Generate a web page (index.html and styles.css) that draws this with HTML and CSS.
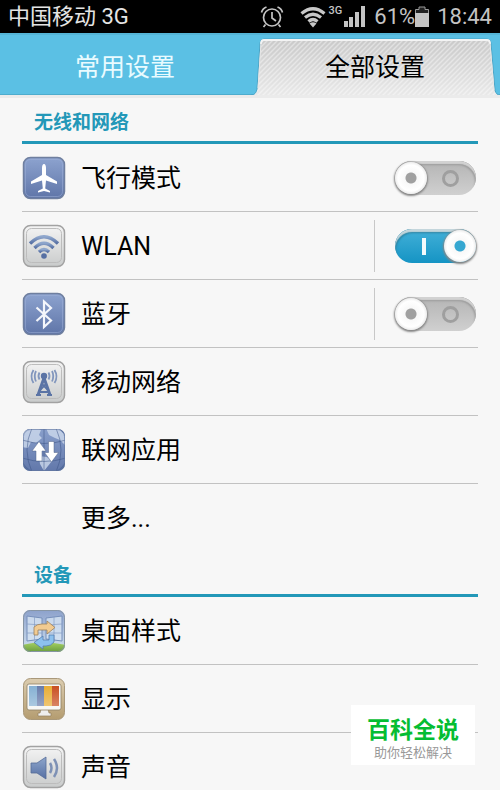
FILE: index.html
```html
<!DOCTYPE html>
<html lang="zh-CN">
<head>
    <meta charset="utf-8">
    <meta name="viewport" content="width=device-width, initial-scale=1">
    <title>全部设置</title>
    <link rel="stylesheet" href="styles.css">
</head>
<body>
    <!-- shared gradients and the tab texture -->
    <svg class="defs" width="0" height="0" aria-hidden="true">
        <defs>
            <linearGradient id="blue" x1="0" y1="0" x2="0" y2="1">
                <stop offset="0" stop-color="#8da3cf"/>
                <stop offset="1" stop-color="#5f75a8"/>
            </linearGradient>
            <linearGradient id="silver" x1="0" y1="0" x2="0" y2="1">
                <stop offset="0" stop-color="#f4f4f4"/>
                <stop offset="1" stop-color="#c9cbcb"/>
            </linearGradient>
            <linearGradient id="ink" x1="0" y1="0" x2="0" y2="1">
                <stop offset="0" stop-color="#8ea6cc"/>
                <stop offset="1" stop-color="#566fa3"/>
            </linearGradient>
            <linearGradient id="sky" x1="0" y1="0" x2="0" y2="1">
                <stop offset="0" stop-color="#8ba0cb"/>
                <stop offset="1" stop-color="#d3e4f0"/>
            </linearGradient>
            <linearGradient id="wood" x1="0" y1="0" x2="0" y2="1">
                <stop offset="0" stop-color="#dccdb0"/>
                <stop offset="1" stop-color="#b49c70"/>
            </linearGradient>
            <linearGradient id="grass" x1="0" y1="0" x2="0" y2="1">
                <stop offset="0" stop-color="#a4cf62"/>
                <stop offset="1" stop-color="#63983a"/>
            </linearGradient>
            <linearGradient id="tabfade" x1="0" y1="0" x2="0" y2="1">
                <stop offset="0" stop-color="#c9c9c9"/>
                <stop offset="1" stop-color="#e9e9e9"/>
            </linearGradient>
            <linearGradient id="shine" x1="0" y1="0" x2="0" y2="1">
                <stop offset="0" stop-color="#fff" stop-opacity="0"/>
                <stop offset="1" stop-color="#fff" stop-opacity=".5"/>
            </linearGradient>
            <pattern id="stripes" width="5" height="5" patternUnits="userSpaceOnUse">
                <path d="M-1 1L1 -1M0 5L5 0M4 6L6 4" stroke="#fff" stroke-opacity=".4" stroke-width="1.4"/>
            </pattern>
            <clipPath id="tile"><rect x="1" y="1" width="42" height="42" rx="7"/></clipPath>
        </defs>
    </svg>

    <header>
        <div class="statusbar">
            <span class="carrier">中国移动 3G</span>
            <svg class="alarm" width="24" height="24" viewBox="0 0 24 24" fill="none" stroke="#c4c4c4" stroke-width="1.7">
                <circle cx="12" cy="12.5" r="8.5"/>
                <path d="M12 7v6l4 3M5.5 19.5l-2 2.5M18.5 19.5l2 2.5M1.5 7.5Q2.5 3.5 6.5 2M22.5 7.5Q21.5 3.5 17.5 2"/>
            </svg>
            <svg class="wifi" width="26" height="22" viewBox="0 0 26 22" fill="none" stroke="#c8c8c8" stroke-width="3.2">
                <path d="M1.5 7.5Q13 -2 24.5 7.5M5 11.5Q13 5 21 11.5M8.5 15.5Q13 11.5 17.5 15.5"/>
                <path d="M9.5 17.5Q13 15 16.5 17.5L13 21.5z" fill="#c8c8c8" stroke="none"/>
            </svg>
            <span class="net">3G</span>
            <svg class="signal" width="22" height="22" viewBox="0 0 22 22" fill="#c4c4c4">
                <path d="M0 15h4v6H0zM5 11h4v10H5zM11 6h4v15h-4zM17 0h4v21h-4z"/>
            </svg>
            <span class="level">61%</span>
            <svg class="battery" width="14" height="22" viewBox="0 0 14 22">
                <path d="M.5 3.500H4V1h6v2.500h3.500V8H.5z" fill="#222" stroke="#999"/>
                <path d="M0 7h14v14H0z" fill="#c4c4c4"/>
            </svg>
            <span class="clock">18:44</span>
        </div>
        <nav class="tabs">
            <button type="button" class="tab">常用设置</button>
            <button type="button" class="tab active">
                <svg viewBox="0 0 250 62" preserveAspectRatio="none" aria-hidden="true">
                    <path d="M1 62Q6 62 7 56L10 10Q10 6 14 6H237Q241 6 241 10L245 57Q246 62 250 62z" fill="url(#tabfade)"/>
                    <path d="M1 62Q6 62 7 56L10 10Q10 6 14 6H237Q241 6 241 10L245 57Q246 62 250 62z" fill="url(#stripes)"/>
                    <path d="M1 62Q6 62 7 56L10 10Q10 6 14 6H237Q241 6 241 10L245 57Q246 62 250 62" fill="none" stroke="#49a5c8"/>
                    <path d="M11 11Q11 7 14 7H237Q240 7 240 11" fill="none" stroke="#f4f4f4" stroke-width="2"/>
                    <path d="M8 55L11 10M240 10L244 57" fill="none" stroke="#e6e6e6"/>
                </svg>
                <span>全部设置</span>
            </button>
        </nav>
    </header>

    <main>
        <section>
            <h2>无线和网络</h2>
            <ul>
                <li>
                    <svg class="icon" viewBox="0 0 44 44">
                        <rect x="1.5" y="1.5" width="41" height="41" rx="7" fill="url(#blue)" stroke="#6f7f9f" stroke-width="1.5"/>
                        <rect x="3.5" y="3.5" width="37" height="37" rx="5" fill="none" stroke="#9fb2d8" stroke-opacity=".5"/>
                        <path d="M22 8c1.400 0 2 2 2 4v7l11 6.500V28l-11-3.500-.8 8 4.800 2.500v1.500L22 35l-6 1.500V35l4.800-2.500-.8-8L9 28v-2.500L20 19v-7c0-2 .6-4 2-4z" fill="#fff"/>
                    </svg>
                    <label for="airplane">飞行模式</label>
                    <span class="control"><input type="checkbox" id="airplane" class="switch"></span>
                </li>
                <li>
                    <svg class="icon" viewBox="0 0 44 44">
                        <rect x="1.5" y="1.5" width="41" height="41" rx="7" fill="url(#silver)" stroke="#a2a2a2" stroke-width="1.5"/>
                        <rect x="4.5" y="4.5" width="35" height="34" rx="5" fill="none" stroke="#bcbcbc"/>
                        <g fill="none" stroke="url(#ink)" stroke-width="3.4">
                            <path d="M8 19.5Q22 6 36 19.500"/>
                            <path d="M12.5 24Q22 14.5 31.5 24"/>
                            <path d="M17 28Q22 23 27 28"/>
                        </g>
                        <circle cx="22" cy="32" r="2.800" fill="#566fa3"/>
                    </svg>
                    <label for="wlan">WLAN</label>
                    <span class="control split"><input type="checkbox" id="wlan" class="switch" checked></span>
                </li>
                <li>
                    <svg class="icon" viewBox="0 0 44 44">
                        <rect x="1.5" y="1.5" width="41" height="41" rx="7" fill="url(#blue)" stroke="#6f7f9f" stroke-width="1.5"/>
                        <rect x="3.5" y="3.5" width="37" height="37" rx="5" fill="none" stroke="#9fb2d8" stroke-opacity=".5"/>
                        <path d="M14.5 15.5L29 28.5L22 35V9.5L29 16L14.5 29" fill="none" stroke="#f4f6fb" stroke-width="2.2"/>
                    </svg>
                    <label for="bluetooth">蓝牙</label>
                    <span class="control split"><input type="checkbox" id="bluetooth" class="switch"></span>
                </li>
                <li>
                    <svg class="icon" viewBox="0 0 44 44">
                        <rect x="1.5" y="1.5" width="41" height="41" rx="7" fill="url(#silver)" stroke="#a2a2a2" stroke-width="1.5"/>
                        <rect x="4.5" y="4.5" width="35" height="34" rx="5" fill="none" stroke="#bcbcbc"/>
                        <g fill="none" stroke="#5b74a5" stroke-width="1.8">
                            <path d="M22 18L16 35M22 18L28 35" stroke-width="3"/>
                            <path d="M20 24L27 31M24 24L17 31M17 32h10"/>
                            <path d="M17.5 12.5Q15.5 16 17.5 19.5M26.5 12.5Q28.5 16 26.5 19.5M14 11Q11.5 16 14 21.5M30 11Q32.5 16 30 21.5M11.500 10Q7.5 16.5 11.5 23M32.5 10Q36.5 16.5 32.5 23" stroke="#8196bd"/>
                        </g>
                        <circle cx="22" cy="16" r="3.2" fill="#5b74a5"/>
                        <path d="M14 34h5v2h-5zM25 34h5v2h-5z" fill="#5b74a5"/>
                    </svg>
                    <a href="#mobile">移动网络</a>
                </li>
                <li>
                    <svg class="icon" viewBox="0 0 44 44">
                        <g clip-path="url(#tile)">
                            <rect width="44" height="44" fill="#526b9d"/>
                            <circle cx="22" cy="21" r="25" fill="url(#blue)"/>
                            <path d="M0 4Q12 -2 19 2L17 7L20 10L14 15L9 14L6 20L0 19zM24 0L36 0L42 6L44 18L38 12L33 10L27 7zM17 28L25 29L30 33L26 38L22 43L18 36z" fill="#cdd9ec" opacity=".8"/>
                            <path d="M22 0V44M10 0Q0 22 10 44M34 0Q44 22 34 44M0 12Q22 19 44 12M0 30Q22 37 44 30" fill="none" stroke="#3c5485" stroke-opacity=".5"/>
                        </g>
                        <path d="M17 13.5L24 23H20V33H14V23H10z" fill="#fff" stroke="#53658b" stroke-width=".5"/>
                        <path d="M26.5 13.5H32V24.5H36.5L29.5 34L22.5 24.5H26.5z" fill="#fff" stroke="#53658b" stroke-width=".5"/>
                        <rect x="1.5" y="1.5" width="41" height="41" rx="7" fill="none" stroke="#62769e" stroke-opacity=".6"/>
                    </svg>
                    <a href="#apps">联网应用</a>
                </li>
                <li>
                    <span class="icon"></span>
                    <a href="#more">更多...</a>
                </li>
            </ul>
        </section>

        <section>
            <h2>设备</h2>
            <ul>
                <li>
                    <svg class="icon" viewBox="0 0 44 44">
                        <g clip-path="url(#tile)">
                            <rect width="44" height="44" fill="url(#sky)"/>
                            <path d="M0 36Q20 31 44 36V44H0z" fill="url(#grass)"/>
                            <path d="M5 7L20 9V30L5 32zM24 9L40 7V32L24 30z" fill="#d6e4f3" fill-opacity=".8" stroke="#768fbb"/>
                            <path d="M5 15L20 16M5 24H20M12.5 8V31M24 16L40 15M24 24H40M32 8V31" fill="none" stroke="#849cc5" stroke-opacity=".7"/>
                        </g>
                        <path d="M12 18Q15 15 20 15H25V12L33 18.5L25 25V21H16V26H12z" fill="#f2cb91" stroke="#9b805d" stroke-width=".8"/>
                        <path d="M32 26V33Q29 37 24 37H21V40L12 33.5L21 27V31H27V26z" fill="#8cc1ee" stroke="#557daf" stroke-width=".8"/>
                        <rect x="1.5" y="1.5" width="41" height="41" rx="7" fill="none" stroke="#8795a4"/>
                    </svg>
                    <a href="#home">桌面样式</a>
                </li>
                <li>
                    <svg class="icon" viewBox="0 0 44 44">
                        <rect x="1.5" y="1.5" width="41" height="41" rx="7" fill="url(#wood)" stroke="#a9987a"/>
                        <path d="M19 32H26L27 36H29V39H16V36H18z" fill="#eee" stroke="#94805c" stroke-width=".7"/>
                        <rect x="5" y="7" width="34" height="26" rx="2" fill="#f7f7f5" stroke="#8f8165" stroke-width=".8"/>
                        <path d="M7 9h8v20H7z" fill="#86b1d3"/>
                        <path d="M15 9h7v20h-7z" fill="#687cab"/>
                        <path d="M22 9h8v20h-8z" fill="#e9ad35"/>
                        <path d="M30 9h7v20h-7z" fill="#c94f22"/>
                        <path d="M7 9h30v20H7z" fill="url(#shine)" opacity=".6"/>
                    </svg>
                    <a href="#display">显示</a>
                </li>
                <li>
                    <svg class="icon" viewBox="0 0 44 44">
                        <rect x="1.5" y="1.5" width="41" height="41" rx="7" fill="url(#silver)" stroke="#a2a2a2" stroke-width="1.5"/>
                        <rect x="4.5" y="4.5" width="35" height="34" rx="5" fill="none" stroke="#bcbcbc"/>
                        <path d="M9 18H15L24 12V34L15 28H9z" fill="url(#ink)" stroke="#566c98" stroke-width=".8"/>
                        <path d="M28 18Q31 23 28 28M32 14Q38 23 32 32" fill="none" stroke="#7e91b5" stroke-width="2.5"/>
                    </svg>
                    <a href="#sound">声音</a>
                </li>
            </ul>
        </section>
    </main>

    <aside class="badge">
        <strong>百科全说</strong>
        <span>助你轻松解决</span>
    </aside>
</body>
</html>
```

FILE: styles.css
```css
*,
*::before,
*::after {
    box-sizing: border-box;
}
body {
    margin: 0;
    height: 100vh;
    overflow: hidden;
    background: #f7f7f7;
    color: #000;
    font-family: Roboto, "Noto Sans CJK SC", sans-serif;
    font-size: 25px;
}
svg {
    display: block;
    flex: none;
}
.defs {
    position: absolute;
}

/* status bar */
.statusbar {
    display: flex;
    align-items: center;
    height: 33px;
    padding: 0 8px;
    background: #000;
    color: #c4c4c4;
    font-size: 22px;
    line-height: 32px;
    white-space: nowrap;
}
.carrier {
    margin-right: auto;
    color: #e4e4e4;
}
.wifi {
    margin-left: 16px;
}
.net {
    align-self: flex-start;
    margin: 0 2px 0 3px;
    font-size: 11px;
    font-weight: 500;
    line-height: 22px;
}
.level,
.clock {
    margin-left: 8px;
}

/* tabs */
.tabs {
    display: grid;
    grid-template-columns: 1fr 1fr;
    height: 65px;
    border-bottom: 3px solid #ebebeb;
    background: #5bc0e4;
    box-shadow: inset 0 2px #54b4d6, inset 0 -1px #4daccd;
}
.tab {
    position: relative;
    border: 0;
    padding: 8px 0 0;
    background: none;
    color: #e9fbff;
    font: inherit;
    line-height: 38px;
}
.tab.active {
    color: #000;
}
.tab svg {
    position: absolute;
    top: 0;
    left: 0;
    width: 100%;
    height: 100%;
}
.tab span {
    position: relative;
}

/* list */
main {
    padding: 1px 22px 0;
}
h2 {
    margin: 0;
    height: 45px;
    padding: 5px 12px 0;
    border-bottom: 3px solid #2398b8;
    color: #2398b8;
    font-size: 19px;
    font-weight: 700;
    line-height: 38px;
}
ul {
    margin: 0;
    padding: 0;
    list-style: none;
}
li {
    display: flex;
    align-items: center;
    height: 68px;
    border-bottom: 1px solid #c2c2c2;
}
li:last-child {
    border-bottom-color: transparent;
}
.icon {
    width: 44px;
    height: 44px;
}
li label,
li a {
    flex: 1;
    margin-left: 15px;
    padding-top: 3px;
    color: #000;
    line-height: 38px;
    text-decoration: none;
}
.control {
    display: flex;
    align-items: center;
    height: 52px;
    padding-left: 20px;
}
.control.split {
    border-left: 1px solid #c8c8c8;
}

/* on/off switch */
.switch {
    -webkit-appearance: none;
    appearance: none;
    position: relative;
    width: 81px;
    height: 34px;
    margin: 0 2px 0 0;
    border-radius: 17px;
    background: linear-gradient(#b4b4b4, #d0d0d0);
    box-shadow: inset 0 3px 1px #d2d2d2, inset -1px 4px 2px #979797;
}
.switch::before {
    content: "";
    position: absolute;
    top: 1px;
    left: 0;
    width: 32px;
    height: 32px;
    border-radius: 50%;
    background: radial-gradient(circle, #a0a0a0 5px, #f8f8f8 6px, #fff 13px, #ececec 16px);
    box-shadow: 0 0 1px #888, 0 1px 2px 1px #888;
}
.switch::after {
    content: "";
    position: absolute;
    top: 9px;
    right: 17px;
    width: 17px;
    height: 17px;
    border: 3px solid #9f9f9f;
    border-radius: 50%;
}
.switch:checked {
    background: linear-gradient(#43b0d8, #1594c4);
    box-shadow: inset 0 3px 1px #c4d6dc, inset 1px 4px 2px #277f9e;
}
.switch:checked::before {
    left: 49px;
    background: radial-gradient(circle, #35a7d1 5px, #f8f8f8 6px, #fff 13px, #ececec 16px);
}
.switch:checked::after {
    left: 27px;
    width: 4px;
    height: 17px;
    border: 0;
    border-radius: 0;
    background: #f4fafc;
}

/* floating badge */
.badge {
    position: fixed;
    right: 25px;
    bottom: 25px;
    padding: 12px 16px 4px;
    background: #fff;
    color: #999;
    font-size: 13px;
    line-height: 16px;
    text-align: center;
}
.badge strong {
    display: block;
    color: #05bd32;
    font-size: 23px;
    font-weight: 700;
    line-height: 28px;
}
```
